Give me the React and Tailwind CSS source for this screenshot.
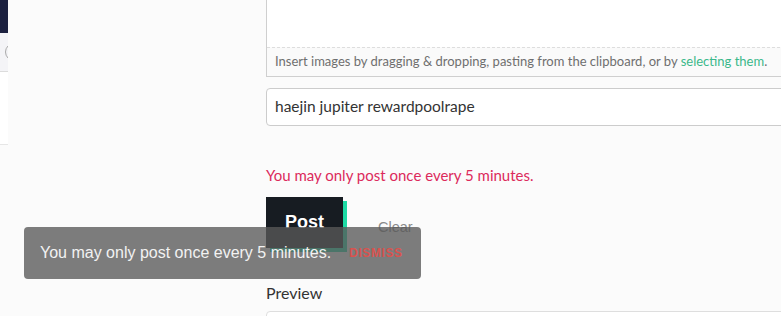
export default function App() {
  const sans = { fontFamily: '"Source Sans Pro", Lato, "Liberation Sans", sans-serif' };
  return (
    <div className="relative flex h-[316px] w-[781px] overflow-hidden bg-[#fbfbfb]">
      {/* sliver of the page behind */}
      <div className="flex w-2 shrink-0 flex-col">
        <div className="h-[33px] bg-[#1c2140]" />
        <div className="relative h-[39px] overflow-hidden border-b border-[#dcdcdc] bg-[#f4f4f7]">
          <div className="absolute left-[5px] top-[10px] h-[18px] w-[18px] rounded-full border border-[#a9a9a9]" />
        </div>
        <div className="h-[72px] bg-white" />
        <div className="flex-1 border-t border-[#e6e6e6] bg-[#fbfbfb]" />
      </div>

      <div className="flex-1 pl-[258px]" style={sans}>
        <div className="w-[540px]">
          {/* editor */}
          <div className="border-x border-b border-[#cfcfcf] bg-white">
            <div className="h-[47px]" />
            <div className="flex h-[29px] items-center border-t border-dashed border-[#dddddd] bg-[#fafafa] pl-2 text-[13px] text-[#6f6f6f]">
              Insert images by dragging &amp; dropping, pasting from the clipboard, or by&nbsp;
              <span className="text-[#3ab88a]">selecting them</span>.
            </div>
          </div>

          <div className="mt-[11px] flex h-[38px] items-center rounded border border-[#cccccc] bg-white pl-2 text-[15.5px] text-[#333]">
            haejin jupiter rewardpoolrape
          </div>

          <div className="mt-[39px] text-[15px] leading-5 text-[#dc2a5c]">
            You may only post once every 5 minutes.
          </div>

          <div className="mt-[12px] flex items-start">
            <button
              className="flex h-[51px] w-[77px] items-center justify-center bg-[#171c22] text-[18px] font-bold text-white shadow-[4px_4px_0_#1ddba5]"
              style={{ fontFamily: '"Liberation Sans", Arial, sans-serif' }}
            >
              Post
            </button>
            <span
              className="ml-[35px] mt-[20px] text-[14.5px] text-[#8a8a8a]"
              style={{ fontFamily: '"Liberation Sans", Arial, sans-serif' }}
            >
              Clear
            </span>
          </div>

          <div className="mt-[35px] text-[16px] leading-5 text-[#333]">Preview</div>
          <div className="mt-[8px] h-10 rounded border border-[#dedede] bg-white" />
        </div>
      </div>

      {/* toast */}
      <div
        className="absolute left-[24px] top-[227px] flex h-[52px] w-[397px] items-center rounded bg-[rgba(88,88,88,0.78)] pl-4"
        style={{ fontFamily: '"Liberation Sans", Arial, sans-serif' }}
      >
        <span className="text-[16px] text-[#f2f2f2]">You may only post once every 5 minutes.</span>
        <span className="ml-[18px] text-[12px] font-bold tracking-[0.6px] text-[#d9534f]">DISMISS</span>
      </div>
    </div>
  );
}
